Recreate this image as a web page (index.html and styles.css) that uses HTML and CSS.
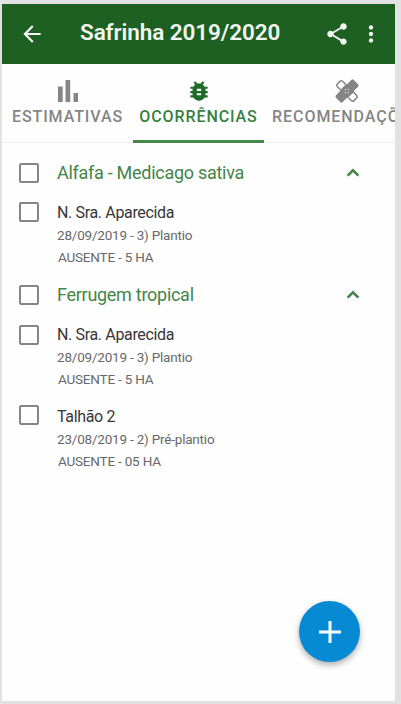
FILE: index.html
```html
<!DOCTYPE html>
<html lang="pt-BR">
<head>
<meta charset="utf-8">
<title>Safrinha 2019/2020</title>
<link rel="stylesheet" href="styles.css">
</head>
<body>
<div class="app">
  <header class="bar">
    <svg class="icon back" viewBox="0 0 24 24"><path d="M20 11H7.83l5.59-5.59L12 4l-8 8 8 8 1.41-1.41L7.83 13H20v-2z"/></svg>
    <h1 class="title">Safrinha 2019/2020</h1>
    <svg class="icon share" viewBox="0 0 24 24"><path d="M18 16.08c-.76 0-1.44.3-1.96.77L8.91 12.7c.05-.23.09-.46.09-.7s-.04-.47-.09-.7l7.05-4.11c.54.5 1.25.81 2.04.81 1.66 0 3-1.34 3-3s-1.34-3-3-3-3 1.34-3 3c0 .24.04.47.09.7L8.04 9.81C7.5 9.31 6.79 9 6 9c-1.66 0-3 1.34-3 3s1.34 3 3 3c.79 0 1.5-.31 2.04-.81l7.12 4.16c-.05.21-.08.43-.08.65 0 1.61 1.31 2.92 2.92 2.92s2.92-1.31 2.92-2.92-1.31-2.92-2.92-2.92z"/></svg>
    <svg class="icon more" viewBox="0 0 24 24"><circle cx="12" cy="6" r="2"/><circle cx="12" cy="12" r="2"/><circle cx="12" cy="18" r="2"/></svg>
  </header>
  <nav class="tabs">
    <div class="tab">
      <svg class="tab-icon" viewBox="0 0 26 26"><path d="M3 8.5h4.7V24H3zM10.5 2h4.7v22h-4.7zM18.5 15H23v9h-4.5z"/></svg>
      <span class="label estimates">ESTIMATIVAS</span>
    </div>
    <div class="tab active">
      <svg class="tab-icon" viewBox="0 0 24 24"><path d="M20 8h-2.81c-.45-.78-1.07-1.45-1.82-1.96L17 4.41 15.59 3l-2.17 2.17C12.96 5.06 12.49 5 12 5s-.96.06-1.41.17L8.41 3 7 4.41l1.62 1.63C7.88 6.55 7.26 7.22 6.81 8H4v2h2.09c-.05.33-.09.66-.09 1v1H4v2h2v1c0 .34.04.67.09 1H4v2h2.81c1.04 1.79 2.97 3 5.19 3s4.15-1.21 5.19-3H20v-2h-2.09c.05-.33.09-.66.09-1v-1h2v-2h-2v-1c0-.34-.04-.67-.09-1H20V8zm-6 8h-4v-2h4v2zm0-4h-4v-2h4v2z"/></svg>
      <span class="label occurrences">OCORRÊNCIAS</span>
    </div>
    <div class="tab">
      <svg class="tab-icon" viewBox="0 0 26 26"><g transform="rotate(45 13 13)"><rect x="8.2" y=".4" width="9.6" height="8.8" rx="1.8"/><rect x="8.2" y="16.8" width="9.6" height="8.8" rx="1.8"/><path d="M8.2 7.5h9.6v11H8.2z"/><path class="outline" d="M8.2 9.2H3a2 2 0 0 0-1.8 2v3.6a2 2 0 0 0 1.8 2h5.2zM17.8 9.2H23a2 2 0 0 1 1.8 2v3.6a2 2 0 0 1-1.8 2h-5.2z"/><g class="holes"><circle cx="11" cy="13" r=".7"/><circle cx="15" cy="13" r=".7"/><circle cx="13" cy="11" r=".7"/><circle cx="13" cy="15" r=".7"/></g></g></svg>
      <span class="label advice">RECOMENDAÇÕES</span>
    </div>
  </nav>
  <main class="list">
    <section class="group">
      <div class="group-head"><i class="box"></i><h2 class="crop">Alfafa - Medicago sativa</h2><svg class="chevron" viewBox="0 0 14 10"><path d="M1.6 7.7 7 2.3l5.4 5.4"/></svg></div>
      <div class="item"><i class="box"></i><div class="info"><p class="name">N. Sra. Aparecida</p><p class="date">28/09/2019 - 3) Plantio</p><p class="status">AUSENTE - 5 HA</p></div></div>
    </section>
    <section class="group">
      <div class="group-head"><i class="box"></i><h2 class="crop">Ferrugem tropical</h2><svg class="chevron" viewBox="0 0 14 10"><path d="M1.6 7.7 7 2.3l5.4 5.4"/></svg></div>
      <div class="item"><i class="box"></i><div class="info"><p class="name">N. Sra. Aparecida</p><p class="date">28/09/2019 - 3) Plantio</p><p class="status">AUSENTE - 5 HA</p></div></div>
      <div class="item last"><i class="box"></i><div class="info"><p class="name">Talhão 2</p><p class="date">23/08/2019 - 2) Pré-plantio</p><p class="status">AUSENTE - 05 HA</p></div></div>
    </section>
  </main>
  <button class="fab" aria-label="Adicionar"><svg viewBox="0 0 24 24"><path d="M12 1v22M1 12h22"/></svg></button>
</div>
</body>
</html>
```
FILE: styles.css
```css
* { box-sizing: border-box; }
body { margin: 0; height: 704px; padding: 4px 6px 3px 2px; background: #e2e2e2; font-family: Roboto, sans-serif; overflow: hidden; }
h1, h2, p { margin: 0; font-weight: 400; }
.app { position: relative; width: 393px; height: 697px; overflow: hidden; background: #fefefe; }
.bar { display: flex; align-items: center; height: 60px; padding-left: 17px; background: #1e6022; }
.icon { width: 26px; height: 26px; fill: #f4f8f4; flex: none; }
.title { width: 202px; margin: -4px 0 0 35px; font-size: 22.5px; line-height: 28px; font-weight: 600; letter-spacing: -.1px; color: #f1f6f1; white-space: nowrap; }
.share { margin-left: 42px; }
.more { margin-left: 8px; }
.tabs { display: flex; height: 79px; border-bottom: 1px solid #eee; }
.tab { flex: none; width: 131px; display: flex; flex-direction: column; align-items: center; padding-top: 14px; color: #858585; }
.tab:last-child { width: 160px; }
.tab.active { height: 79px; color: #1e6a26; border-bottom: 3px solid #45894a; }
.tab-icon { width: 26px; height: 26px; fill: currentColor; }
.tab:last-child .tab-icon { margin-left: 6px; }
.outline { fill: none; stroke: currentColor; stroke-width: 1.5; }
.holes { fill: #ddd; }
.label { font-size: 16px; line-height: 20px; margin-top: 3px; font-weight: 500; letter-spacing: .9px; white-space: nowrap; }
.occurrences { color: #38803e; }
.advice { align-self: flex-start; margin-left: 8px; letter-spacing: .95px; }
.list { padding: 17px 35px 0 17px; }
.group-head { display: flex; align-items: center; height: 26px; margin-bottom: 17px; }
.box { width: 20px; height: 20px; flex: none; border: 2px solid #858585; border-radius: 2px; }
.crop { flex: 1; margin-left: 18px; font-size: 18px; line-height: 26px; letter-spacing: -.28px; color: #438548; }
.chevron { width: 14px; height: 10px; fill: none; stroke: #438548; stroke-width: 2.5; }
.item { display: flex; height: 80px; }
.item .box { margin-top: -1px; }
.info { margin-left: 18px; white-space: nowrap; }
.name { font-size: 16px; line-height: 20px; letter-spacing: -.35px; color: #373737; }
.date, .status { font-size: 13.5px; line-height: 22px; letter-spacing: -.2px; color: #686868; }
.date { margin-top: 1px; }
.status { margin-left: 1px; }
.group + .group .group-head { margin-top: -1px; }
.group + .group .item .box { margin-top: 0; }
.item.last { padding-top: 2px; }
.group + .group .item.last .box { margin-top: -2px; }
.fab { position: absolute; right: 35px; bottom: 39px; width: 61px; height: 61px; border: 0; padding: 0; display: grid; place-items: center; border-radius: 50%; background: #078ad4; box-shadow: 0 3px 6px rgba(0,0,0,.32); }
.fab svg { width: 24px; height: 24px; stroke: #f5fbff; stroke-width: 3; }
```
